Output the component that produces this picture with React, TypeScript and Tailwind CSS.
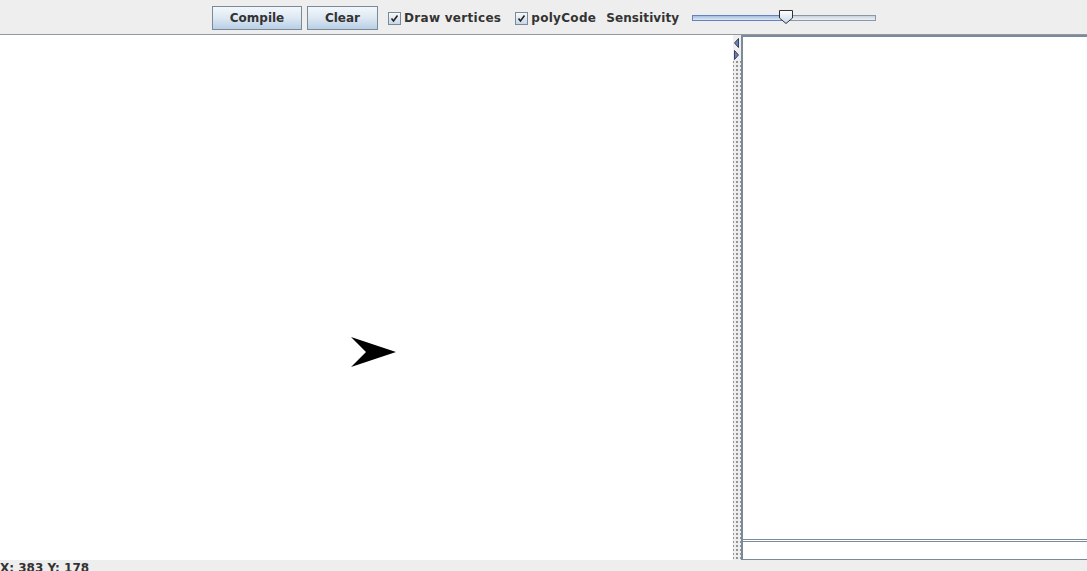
import React from 'react';

const font = { fontFamily: '"DejaVu Sans", Verdana, sans-serif' };

function MetalButton({ label, width }: { label: string; width: string }) {
  return (
    <button
      className={`${width} h-[24px] border border-[#7a8a99] bg-gradient-to-b from-[#f3f7fb] via-[#dde8f3] to-[#b8cfe5] text-[12px] font-bold text-[#333333] flex items-center justify-center`}
    >
      {label}
    </button>
  );
}

function MetalCheck({ label, className }: { label: string; className?: string }) {
  return (
    <label className={`flex items-center gap-[3px] text-[12px] font-bold text-[#333333] tracking-[0.3px] ${className ?? ''}`}>
      <span className="w-[13px] h-[13px] border border-[#7a8a99] bg-gradient-to-b from-[#f7f9fc] to-[#c8d8e8] flex items-center justify-center">
        <svg width="9" height="9" viewBox="0 0 9 9">
          <path d="M1.5 4.5 L3.5 7 L7.5 1.5" fill="none" stroke="#222" strokeWidth="1.6" />
        </svg>
      </span>
      {label}
    </label>
  );
}

function Slider() {
  return (
    <div className="relative w-[184px] h-[24px] ml-[13px] flex items-center">
      <div className="flex w-full h-[6px]">
        <div className="w-[94px] h-full border border-[#6382bf] bg-gradient-to-b from-[#a6bfe0] to-[#dde8f3]" />
        <div className="flex-1 h-full border border-[#8a99a8] border-l-0 bg-gradient-to-b from-[#c8d4e0] to-[#eef2f6]" />
      </div>
      <svg className="absolute left-[86px] top-[3px]" width="16" height="16" viewBox="0 0 16 16">
        <defs>
          <linearGradient id="thumb" x1="0" y1="0" x2="0" y2="1">
            <stop offset="0" stopColor="#ffffff" />
            <stop offset="1" stopColor="#c4d6ea" />
          </linearGradient>
        </defs>
        <path d="M1.5 1.5 H14.5 V9 L8 14.5 L1.5 9 Z" fill="url(#thumb)" stroke="#333" strokeWidth="1" />
      </svg>
    </div>
  );
}

export default function App() {
  return (
    <div className="w-[1087px] h-[571px] overflow-hidden bg-[#eeeeee] flex flex-col" style={font}>
      {/* toolbar */}
      <div className="h-[35px] shrink-0 border-b border-[#8e99a4] flex items-center pt-[2px] pl-[212px]">
        <MetalButton label="Compile" width="w-[90px]" />
        <div className="w-[5px]" />
        <MetalButton label="Clear" width="w-[71px]" />
        <MetalCheck label="Draw vertices" className="ml-[10px]" />
        <MetalCheck label="polyCode" className="ml-[14px]" />
        <span className="ml-[10px] text-[12px] font-bold text-[#333333] tracking-[0.1px]">Sensitivity</span>
        <Slider />
      </div>

      {/* main split */}
      <div className="h-[525px] shrink-0 flex">
        <div className="relative w-[733px] bg-white">
          <svg className="absolute left-0 top-0" width="733" height="525" viewBox="0 0 733 525">
            <polygon points="351,302 396,317 351,332 366,317" fill="#000" />
          </svg>
        </div>

        {/* divider */}
        <div className="w-[8px] flex flex-col bg-[#eeeeee] bg-[radial-gradient(circle,#8c8c8c_0.7px,transparent_0.8px)] bg-[length:4px_4px] bg-[position:2px_1px]">
          <svg className="mt-[2px] bg-[#eeeeee]" width="8" height="24" viewBox="0 0 8 24">
            <path d="M5.5 1.5 L5.5 10.5 L1.5 6 Z" fill="#6382bf" stroke="#223" strokeWidth="0.8" />
            <path d="M1.5 13.5 L1.5 22.5 L5.5 18 Z" fill="#6382bf" stroke="#223" strokeWidth="0.8" />
          </svg>
        </div>

        {/* right panel */}
        <div className="flex-1 flex flex-col border-l-2 border-t-2 border-[#7a8a99] bg-white">
          <div className="flex-1 bg-white" />
          <div className="h-[2px] border-t border-[#7a8a99]" />
          <div className="h-[19px] border-t border-b border-[#7a8a99] bg-white" />
        </div>
      </div>

      {/* status */}
      <div className="h-[20px] shrink-0 text-[12px] font-bold text-[#333333] leading-[15px] pt-[1px]">
        X: 383 Y: 178
      </div>
    </div>
  );
}
